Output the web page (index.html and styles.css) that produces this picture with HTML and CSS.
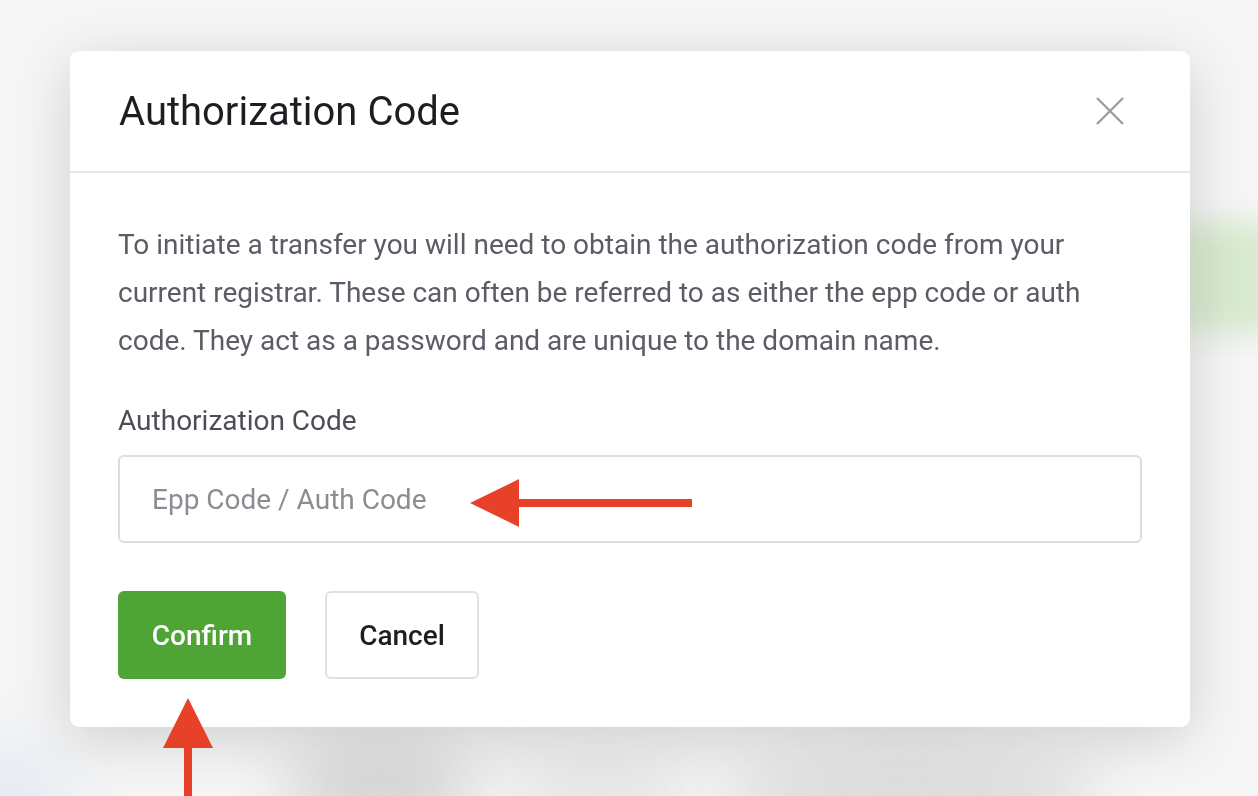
FILE: index.html
```html
<!DOCTYPE html>
<html lang="en">
<head>
    <meta charset="UTF-8">
    <meta name="viewport" content="width=device-width, initial-scale=1.0">
    <title>Authorization Code</title>
    <link rel="stylesheet" href="styles.css">
</head>
<body>
    <div class="backdrop">
        <div class="blob blob-green"></div>
        <div class="blob blob-gray-1"></div>
        <div class="blob blob-gray-2"></div>
        <div class="blob blob-gray-3"></div>
        <div class="blob blob-blue"></div>
    </div>

    <div class="page">
        <div class="modal">
            <div class="modal-header">
                <h2>Authorization Code</h2>
                <button class="close-btn" type="button" aria-label="Close">
                    <svg width="28" height="28" viewBox="0 0 28 28">
                        <path d="M1 1 L27 27 M27 1 L1 27" stroke="#9c9ea4" stroke-width="2.4" fill="none"/>
                    </svg>
                </button>
            </div>

            <div class="modal-body">
                <p class="intro">To initiate a transfer you will need to obtain the authorization code from your current registrar. These can often be referred to as either the epp code or auth code. They act as a password and are unique to the domain name.</p>

                <form class="auth-form">
                    <label for="authCode">Authorization Code</label>
                    <input type="text" id="authCode" placeholder="Epp Code / Auth Code">

                    <div class="actions">
                        <button type="button" class="btn btn-confirm">Confirm</button>
                        <button type="button" class="btn btn-cancel">Cancel</button>
                    </div>
                </form>
            </div>
        </div>
    </div>

    <!-- annotation arrows -->
    <svg class="arrow arrow-left" width="224" height="52" viewBox="0 0 224 52">
        <polygon points="0,26 49,2 49,22 222,22 222,30 49,30 49,50" fill="#e8412a"/>
    </svg>
    <svg class="arrow arrow-up" width="52" height="100" viewBox="0 0 52 100">
        <polygon points="26,0 51,50 30,50 30,100 22,100 22,50 1,50" fill="#e8412a"/>
    </svg>
</body>
</html>
```

FILE: styles.css
```css
body {
    font-family: Roboto, "Noto Sans", Arial, sans-serif;
    margin: 0;
    padding: 0;
    background-color: #f6f6f6;
    overflow: hidden;
    height: 796px;
}

.backdrop {
    position: fixed;
    inset: 0;
    overflow: hidden;
}

.blob {
    position: absolute;
    border-radius: 50%;
    filter: blur(30px);
}

.blob-green {
    left: 1175px;
    top: 222px;
    width: 220px;
    height: 112px;
    border-radius: 20px;
    filter: blur(14px);
    background: #d8ead0;
}

.blob-gray-1 {
    left: 280px;
    top: 750px;
    width: 200px;
    height: 80px;
    background: #d2d2d2;
}

.blob-gray-2 {
    left: 720px;
    top: 755px;
    width: 380px;
    height: 80px;
    background: #d9d9d9;
}

.blob-gray-3 {
    left: 500px;
    top: 760px;
    width: 200px;
    height: 60px;
    background: #e2e2e2;
}

.blob-blue {
    left: -60px;
    top: 740px;
    width: 140px;
    height: 100px;
    background: #e6ebf2;
}

.page {
    position: relative;
    padding: 51px 0 0 70px;
}

.modal {
    width: 1120px;
    background: #fff;
    border-radius: 9px;
    box-shadow: 0 12px 60px rgba(0, 0, 0, 0.16);
}

.modal-header {
    display: flex;
    align-items: center;
    justify-content: space-between;
    height: 120px;
    padding: 0 66px 0 49px;
    border-bottom: 2px solid #e7e7ea;
}

.modal-header h2 {
    margin: 0;
    font-size: 40px;
    font-weight: 400;
    color: #1c1e22;
}

.close-btn {
    border: none;
    background: none;
    padding: 0;
    width: 28px;
    height: 28px;
    cursor: pointer;
}

.close-btn svg {
    display: block;
}

.modal-body {
    padding: 48px;
}

.intro {
    margin: 0 0 32px;
    font-size: 28px;
    line-height: 48px;
    color: #5a5d65;
}

.auth-form {
    display: flex;
    flex-direction: column;
}

.auth-form label {
    font-size: 28px;
    line-height: 48px;
    color: #4b4e56;
    margin-bottom: 10px;
}

.auth-form input {
    height: 88px;
    box-sizing: border-box;
    border: 2px solid #dcdde1;
    border-radius: 6px;
    padding: 0 32px;
    font-family: inherit;
    font-size: 28px;
    color: #1c1e22;
    outline: none;
}

.auth-form input::placeholder {
    color: #8b8d92;
}

.actions {
    display: flex;
    gap: 39px;
    margin-top: 48px;
}

.btn {
    height: 88px;
    box-sizing: border-box;
    border-radius: 6px;
    font-family: inherit;
    font-size: 28px;
    font-weight: 500;
    cursor: pointer;
}

.btn-confirm {
    width: 168px;
    border: none;
    background-color: #4ea434;
    color: #fff;
}

.btn-cancel {
    width: 154px;
    border: 2px solid #dfe0e4;
    background-color: #fff;
    color: #1c1e22;
}

.arrow {
    position: absolute;
}

.arrow-left {
    left: 470px;
    top: 477px;
}

.arrow-up {
    left: 162px;
    top: 698px;
}
```
